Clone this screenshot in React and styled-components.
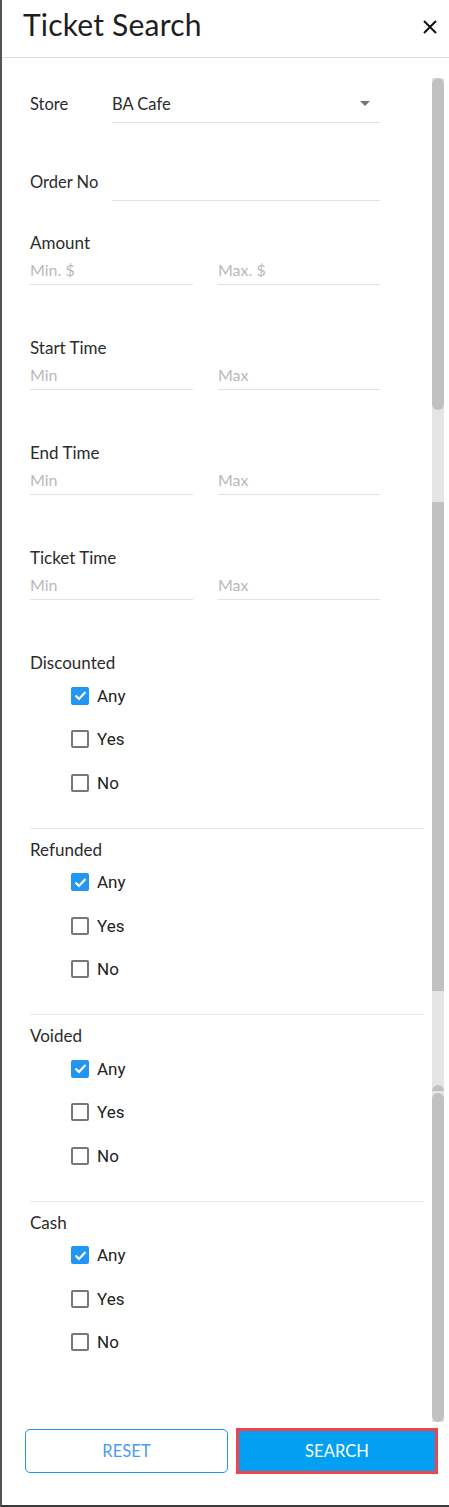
import styled, { createGlobalStyle } from "styled-components";

const GlobalStyle = createGlobalStyle`
  html, body {
    margin: 0;
    padding: 0;
    background: #ffffff;
  }
  * {
    box-sizing: border-box;
  }
`;

const Dialog = styled.div`
  width: 449px;
  height: 1507px;
  display: flex;
  flex-direction: column;
  background: #ffffff;
  border-left: 2px solid #555555;
  border-bottom: 2px solid #3a3a3a;
  font-family: "Lato", "Noto Sans", sans-serif;
  color: #2b2b2b;
`;

const Header = styled.header`
  height: 58px;
  flex-shrink: 0;
  display: flex;
  align-items: center;
  justify-content: space-between;
  padding: 0 10px 9px 21px;
  border-bottom: 1px solid #dddddd;
`;

const Title = styled.h1`
  margin: 0;
  font-size: 30px;
  font-weight: 400;
  color: #1e1e1e;
  letter-spacing: 0.2px;
`;

const CloseButton = styled.button`
  border: none;
  background: none;
  padding: 0;
  margin-top: 5px;
  width: 18px;
  height: 18px;
  display: flex;
  cursor: pointer;
`;

const Body = styled.div`
  flex: 1;
  display: flex;
  min-height: 0;
`;

const Content = styled.div`
  flex: 1;
  padding: 0 8px 0 28px;
`;

const ScrollBar = styled.div`
  width: 12px;
  margin: 20px 5px 0 0;
  display: flex;
  flex-direction: column;
  background: #e4e4e4;
`;

const Segment = styled.div`
  height: ${(p) => p.$h}px;
  flex-shrink: 0;
  background: ${(p) => (p.$thumb ? "#c1c1c1" : "#e4e4e4")};
  border-radius: ${(p) => p.$radius || "0"};
`;

const InlineRow = styled.div`
  display: flex;
  align-items: center;
  margin-top: ${(p) => p.$top}px;
`;

const InlineLabel = styled.label`
  width: 82px;
  font-size: 16.5px;
  padding-bottom: 4px;
  color: #2b2b2b;
`;

const Field = styled.div`
  width: ${(p) => p.$w}px;
  height: ${(p) => p.$h || 30}px;
  display: flex;
  align-items: center;
  justify-content: space-between;
  padding-bottom: ${(p) => p.$pb || 0}px;
  border-bottom: 1px solid #e2e2e2;
  font-size: ${(p) => (p.$placeholder ? "16px" : "16.5px")};
  color: ${(p) => (p.$placeholder ? "#b9b9b9" : "#2b2b2b")};
`;

const Arrow = styled.span`
  width: 0;
  height: 0;
  margin-right: 10px;
  border-left: 5px solid transparent;
  border-right: 5px solid transparent;
  border-top: 5px solid #767676;
`;

const Section = styled.div`
  margin-top: ${(p) => p.$top}px;
`;

const SectionLabel = styled.div`
  height: 20px;
  line-height: 20px;
  font-size: 17px;
  color: #2b2b2b;
`;

const RangeRow = styled.div`
  display: flex;
  gap: 25px;
  margin-top: 2px;
`;

const Group = styled.div`
  padding-bottom: 23px;
  border-bottom: ${(p) => (p.$last ? "none" : "1px solid #e8e8e8")};
  margin-bottom: 11px;
`;

const Options = styled.div`
  margin-top: 1px;
`;

const Option = styled.div`
  height: 43.5px;
  display: flex;
  align-items: center;
  gap: 8px;
  padding-left: 41px;
  font-family: "Roboto", "Liberation Sans", sans-serif;
  font-size: 17px;
  color: #222222;
`;

const Box = styled.span`
  width: 18px;
  height: 18px;
  border-radius: 2px;
  display: flex;
  align-items: center;
  justify-content: center;
  background: ${(p) => (p.$checked ? "#2196f3" : "#ffffff")};
  border: 2px solid ${(p) => (p.$checked ? "#2196f3" : "#777777")};
`;

const Footer = styled.footer`
  height: 83px;
  flex-shrink: 0;
  display: flex;
  gap: 9px;
  padding: 7px 10px 0 23px;
`;

const Button = styled.button`
  height: 44px;
  width: ${(p) => p.$w}px;
  font-family: "Lato", "Noto Sans", sans-serif;
  font-size: 16.5px;
  letter-spacing: 0.1px;
  cursor: pointer;
  border-radius: ${(p) => (p.$primary ? "0" : "5px")};
  color: ${(p) => (p.$primary ? "#ffffff" : "#4a9cf2")};
  background: ${(p) => (p.$primary ? "#03a0f2" : "#ffffff")};
  border: ${(p) => (p.$primary ? "none" : "1px solid #2196f3")};
  outline: ${(p) => (p.$primary ? "3px solid #f2434a" : "none")};
  outline-offset: -2px;
`;

const Check = () => (
  <svg width="13" height="11" viewBox="0 0 13 11">
    <path d="M1.5 5.5 L5 9 L11.5 2" fill="none" stroke="#ffffff" strokeWidth="2.2" />
  </svg>
);

const ranges = [
  { label: "Amount", min: "Min. $", max: "Max. $", top: 32 },
  { label: "Start Time", min: "Min", max: "Max", top: 53 },
  { label: "End Time", min: "Min", max: "Max", top: 53 },
  { label: "Ticket Time", min: "Min", max: "Max", top: 53 },
];

const groups = ["Discounted", "Refunded", "Voided", "Cash"];

const Range = ({ label, min, max, top }) => (
  <Section $top={top}>
    <SectionLabel>{label}</SectionLabel>
    <RangeRow>
      <Field $w={163} $placeholder>{min}</Field>
      <Field $w={162} $placeholder>{max}</Field>
    </RangeRow>
  </Section>
);

const CheckGroup = ({ label, last }) => (
  <Group $last={last}>
    <SectionLabel>{label}</SectionLabel>
    <Options>
      {["Any", "Yes", "No"].map((opt, i) => (
        <Option key={opt}>
          <Box $checked={i === 0}>{i === 0 && <Check />}</Box>
          {opt}
        </Option>
      ))}
    </Options>
  </Group>
);

export default function App() {
  return (
    <>
      <GlobalStyle />
      <Dialog>
        <Header>
          <Title>Ticket Search</Title>
          <CloseButton aria-label="close">
            <svg width="18" height="18" viewBox="0 0 18 18">
              <path d="M3 3 L15 15 M15 3 L3 15" stroke="#111111" strokeWidth="2" />
            </svg>
          </CloseButton>
        </Header>
        <Body>
          <Content>
            <InlineRow $top={31}>
              <InlineLabel>Store</InlineLabel>
              <Field $w={268} $h={34} $pb={4}>
                BA Cafe
                <Arrow />
              </Field>
            </InlineRow>
            <InlineRow $top={44}>
              <InlineLabel>Order No</InlineLabel>
              <Field $w={268} $h={34} $pb={4} />
            </InlineRow>
            {ranges.map((r) => (
              <Range key={r.label} {...r} />
            ))}
            <Section $top={53}>
              {groups.map((g, i) => (
                <CheckGroup key={g} label={g} last={i === groups.length - 1} />
              ))}
            </Section>
          </Content>
          <ScrollBar>
            <Segment $thumb $h={332} $radius="6px" />
            <Segment $h={92} />
            <Segment $thumb $h={489} />
            <Segment $h={94} />
            <Segment $thumb $h={6} $radius="6px 6px 0 0" />
            <Segment $h={2} />
            <Segment $thumb $h={329} $radius="6px" />
          </ScrollBar>
        </Body>
        <Footer>
          <Button $w={203}>RESET</Button>
          <Button $w={200} $primary>SEARCH</Button>
        </Footer>
      </Dialog>
    </>
  );
}
